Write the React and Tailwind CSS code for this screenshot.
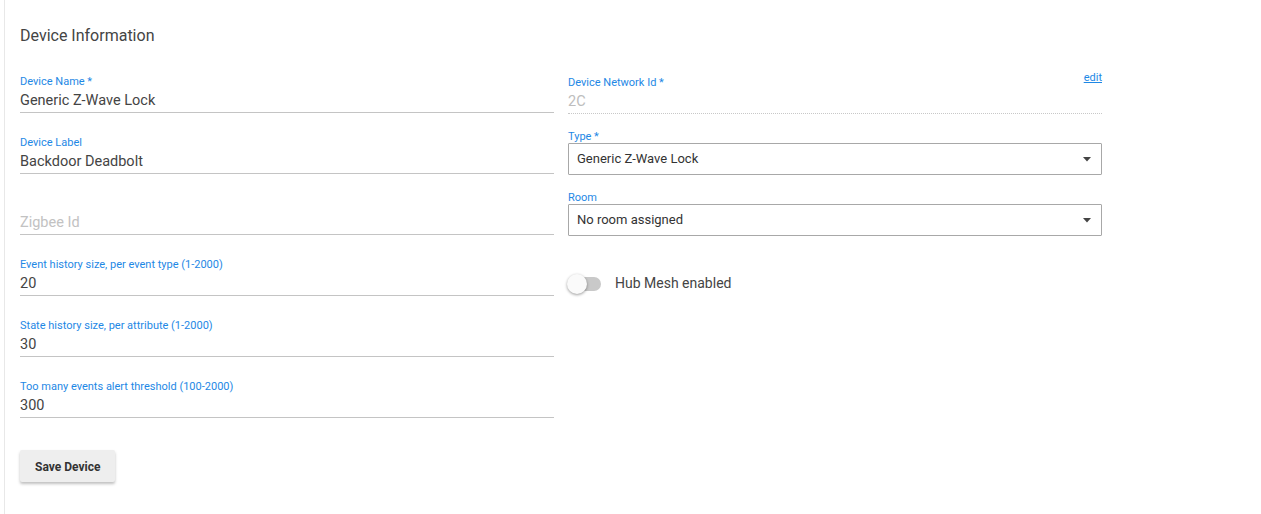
import React from 'react';

const font = { fontFamily: 'Roboto, "Liberation Sans", Arial, sans-serif' };

const TextField = ({ label, value, placeholder }) => (
  <div className="h-[61px] flex flex-col justify-end border-b border-[#c4c4c4] pb-[1px]">
    {label && <div className="text-[11px] leading-[14px] text-[#1e88e5] mb-[2px]">{label}</div>}
    {value ? (
      <div className="text-[14.5px] leading-[20px] text-[#444444]">{value}</div>
    ) : (
      <div className="text-[14.5px] leading-[20px] text-[#c2c2c2]">{placeholder}</div>
    )}
  </div>
);

const SelectField = ({ label, value }) => (
  <div className="h-[61px] flex flex-col justify-end">
    <div className="text-[11px] leading-[14px] text-[#1e88e5] mb-[-1px]">{label}</div>
    <div className="h-[32px] border border-[#a8a8a8] rounded-[1px] flex items-center justify-between pl-[8px] pr-[10px]">
      <span className="text-[13px] text-[#333333]">{value}</span>
      <svg width="8" height="5" viewBox="0 0 8 5">
        <path d="M0 0h8L4 4.5z" fill="#444" />
      </svg>
    </div>
  </div>
);

export default function App() {
  return (
    <div className="min-h-screen bg-white" style={font}>
      <div className="ml-[4px] min-h-screen border-l border-[#e8e8e8] pl-[15px] pt-[26px]">
        <h2 className="text-[16px] leading-[20px] text-[#444444] mb-[6px]">Device Information</h2>

        <div className="flex gap-[14px]">
          <div className="w-[534px] flex flex-col">
            <TextField label="Device Name *" value="Generic Z-Wave Lock" />
            <TextField label="Device Label" value="Backdoor Deadbolt" />
            <TextField placeholder="Zigbee Id" />
            <TextField label="Event history size, per event type (1-2000)" value="20" />
            <TextField label="State history size, per attribute (1-2000)" value="30" />
            <TextField label="Too many events alert threshold (100-2000)" value="300" />
          </div>

          <div className="w-[534px] flex flex-col pt-px">
            <div className="h-[61px] flex flex-col justify-end border-b border-dotted border-[#c8c8c8] pb-[1px]">
              <div className="flex justify-between items-end mb-[2px]">
                <span className="text-[11px] leading-[14px] text-[#1e88e5]">Device Network Id *</span>
                <a href="#" className="text-[11px] leading-[14px] text-[#1e88e5] underline mb-[5px]">edit</a>
              </div>
              <div className="text-[14.5px] leading-[20px] text-[#bdbdbd]">2C</div>
            </div>
            <SelectField label="Type *" value="Generic Z-Wave Lock" />
            <SelectField label="Room" value="No room assigned" />
            <div className="h-[61px] flex flex-col justify-end pb-px">
              <div className="h-[24px] flex items-center">
                <div className="relative w-[34px] h-[20px] flex items-center ml-[-1px]">
                  <div className="ml-[3px] w-[31px] h-[14px] rounded-full bg-[#c9c9c9]" />
                  <div className="absolute left-0 top-0 w-[20px] h-[20px] rounded-full bg-[#fafafa] shadow-[0_1px_3px_rgba(0,0,0,0.4)]" />
                </div>
                <span className="ml-[14px] text-[14px] leading-[20px] text-[#444444] mb-[2px]">Hub Mesh enabled</span>
              </div>
            </div>
          </div>
        </div>

        <button className="mt-[32px] h-[32px] px-[15px] pt-px rounded-[2px] bg-[#eeeeee] text-[12px] font-bold text-[#333333] shadow-[0_2px_3px_rgba(0,0,0,0.25)]">
          Save Device
        </button>
      </div>
    </div>
  );
}
